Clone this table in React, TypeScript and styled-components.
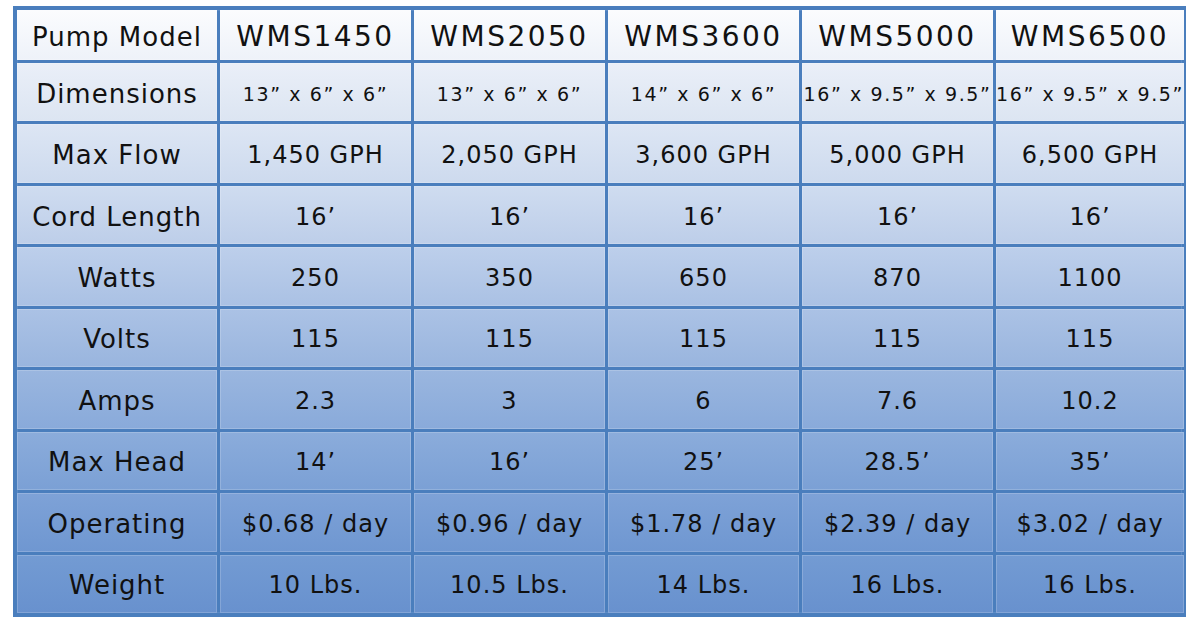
import React from 'react';
import styled, { createGlobalStyle } from 'styled-components';

const GlobalStyle = createGlobalStyle`
    html, body {
        margin: 0;
        padding: 0;
        background: #ffffff;
    }
    body {
        font-family: "DejaVu Sans", "Liberation Sans", sans-serif;
        color: #111;
    }
`;

const models = ['WMS1450', 'WMS2050', 'WMS3600', 'WMS5000', 'WMS6500'];

const specs: { label: string; values: string[]; small?: boolean }[] = [
    { label: 'Dimensions', values: ['13” x 6” x 6”', '13” x 6” x 6”', '14” x 6” x 6”', '16” x 9.5” x 9.5”', '16” x 9.5” x 9.5”'], small: true },
    { label: 'Max Flow', values: ['1,450 GPH', '2,050 GPH', '3,600 GPH', '5,000 GPH', '6,500 GPH'] },
    { label: 'Cord Length', values: ['16’', '16’', '16’', '16’', '16’'] },
    { label: 'Watts', values: ['250', '350', '650', '870', '1100'] },
    { label: 'Volts', values: ['115', '115', '115', '115', '115'] },
    { label: 'Amps', values: ['2.3', '3', '6', '7.6', '10.2'] },
    { label: 'Max Head', values: ['14’', '16’', '25’', '28.5’', '35’'] },
    { label: 'Operating', values: ['$0.68 / day', '$0.96 / day', '$1.78 / day', '$2.39 / day', '$3.02 / day'] },
    { label: 'Weight', values: ['10 Lbs.', '10.5 Lbs.', '14 Lbs.', '16 Lbs.', '16 Lbs.'] },
];

// top / bottom shade of each row, the table fades from white into blue
const shades = [
    ['#fbfcfe', '#eef2f9'],
    ['#eaeff8', '#dce5f2'],
    ['#dde6f4', '#cddaee'],
    ['#cfdcf0', '#bdcee9'],
    ['#bdcfeb', '#aac1e4'],
    ['#abc2e5', '#99b5de'],
    ['#9ab6df', '#89aada'],
    ['#8bacdb', '#7ba0d5'],
    ['#7ea2d7', '#6f97d1'],
    ['#739bd3', '#6891ce'],
];

type Kind = 'head' | 'label' | 'value' | 'small';

const sizes: Record<Kind, [string, string]> = {
    head: ['28px', '2.5px'],
    label: ['26px', '1px'],
    value: ['24px', '1px'],
    small: ['19px', '1.6px'],
};

const Page = styled.div`
    padding: 6px 0 0 13px;
`;

const Table = styled.div`
    box-sizing: border-box;
    width: 1173px;
    height: 611px;
    display: grid;
    grid-template-columns: 200px repeat(4, 191px) 1fr;
    grid-template-rows: 50px repeat(9, 1fr);
    gap: 3px;
    background: #4a7ebd;
    border: 4px solid #4a7ebd;
    box-shadow: inset 0 0 0 1px #5b8bc6;
`;

const Cell = styled.div<{ $row: number; $kind: Kind }>`
    display: flex;
    align-items: center;
    justify-content: center;
    padding-top: 3px;
    white-space: nowrap;
    background: linear-gradient(
        to bottom,
        ${p => shades[p.$row][0]},
        ${p => shades[p.$row][1]}
    );
    box-shadow: inset 0 0 0 1px rgba(255, 255, 255, 0.18);
    font-size: ${p => sizes[p.$kind][0]};
    letter-spacing: ${p => sizes[p.$kind][1]};
`;

export default function App() {
    return (
        <>
            <GlobalStyle />
            <Page>
                <Table>
                    <Cell $row={0} $kind="label">Pump Model</Cell>
                    {models.map(m => (
                        <Cell key={m} $row={0} $kind="head">{m}</Cell>
                    ))}
                    {specs.map((s, i) => (
                        <React.Fragment key={s.label}>
                            <Cell $row={i + 1} $kind="label">{s.label}</Cell>
                            {s.values.map((v, j) => (
                                <Cell key={`${s.label}-${j}`} $row={i + 1} $kind={s.small ? 'small' : 'value'}>
                                    {v}
                                </Cell>
                            ))}
                        </React.Fragment>
                    ))}
                </Table>
            </Page>
        </>
    );
}
